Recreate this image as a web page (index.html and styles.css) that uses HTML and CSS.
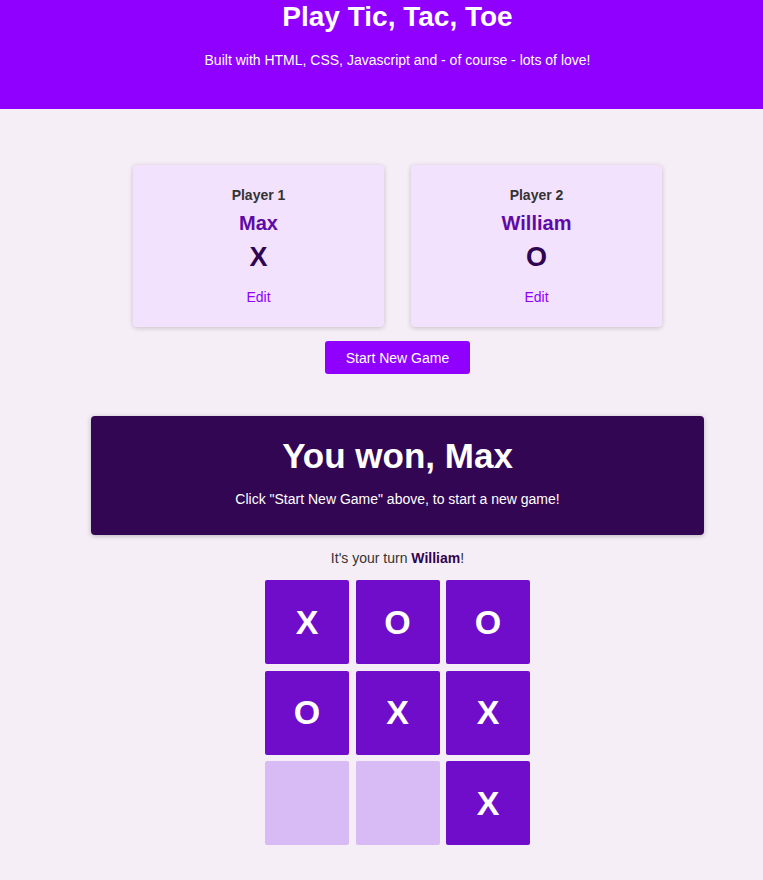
FILE: index.html
```html
<!DOCTYPE html>
<html lang="en">
<head>
<meta charset="utf-8">
<title>Tic Tac Toe</title>
<link rel="stylesheet" href="styles.css">
</head>
<body>
<header class="main-header">
  <h1 class="title">Play Tic, Tac, Toe</h1>
  <p class="subtitle">Built with HTML, CSS, Javascript and - of course - lots of love!</p>
</header>
<main class="content">
  <section class="config">
    <ol class="players">
      <li class="player-card">
        <h2 class="player-label">Player 1</h2>
        <h3 class="player-name">Max</h3>
        <p class="player-symbol">X</p>
        <button class="edit-btn">Edit</button>
      </li>
      <li class="player-card">
        <h2 class="player-label">Player 2</h2>
        <h3 class="player-name">William</h3>
        <p class="player-symbol">O</p>
        <button class="edit-btn">Edit</button>
      </li>
    </ol>
    <button class="start-btn">Start New Game</button>
  </section>
  <section class="game">
    <article class="game-over">
      <h2 class="game-over-title">You won, Max</h2>
      <p class="game-over-text">Click "Start New Game" above, to start a new game!</p>
    </article>
    <p class="turn">It's your turn <span class="turn-name">William</span>!</p>
    <ol class="board">
      <li class="cell filled">X</li>
      <li class="cell filled">O</li>
      <li class="cell filled">O</li>
      <li class="cell filled">O</li>
      <li class="cell filled">X</li>
      <li class="cell filled">X</li>
      <li class="cell"></li>
      <li class="cell"></li>
      <li class="cell filled">X</li>
    </ol>
  </section>
</main>
</body>
</html>
```
FILE: styles.css
```css
* { box-sizing: border-box; }
html, body { margin: 0; padding: 0; }
body {
  font-family: "Liberation Sans", Arial, sans-serif;
  background: #f6eef6;
  color: #333;
  font-size: 14px;
}
.main-header {
  background: #8f00ff;
  color: #fff;
  height: 109px;
  padding-left: 32px;
  text-align: center;
}
.title {
  margin: 0;
  padding-top: 1px;
  font-size: 28px;
  line-height: 32px;
  font-weight: bold;
}
.subtitle {
  margin: 18px 0 0;
  font-size: 14px;
  line-height: 18px;
}
.content {
  padding-left: 32px;
  text-align: center;
}
.config {
  padding-top: 56px;
  display: flex;
  flex-direction: column;
  align-items: center;
}
.players {
  list-style: none;
  margin: 0;
  padding: 0;
  display: flex;
  gap: 27px;
}
.player-card {
  width: 251px;
  height: 162px;
  background: #f3e2fe;
  border-radius: 4px;
  box-shadow: 0 1px 5px rgba(0,0,0,0.2);
  padding-top: 21px;
  display: flex;
  flex-direction: column;
  align-items: center;
}
.player-label {
  margin: 0;
  font-size: 14px;
  line-height: 18px;
  font-weight: bold;
  color: #333;
}
.player-name {
  margin: 7px 0 0;
  font-size: 20px;
  line-height: 24px;
  font-weight: bold;
  color: #5f0aa8;
}
.player-symbol {
  margin: 6px 0 0;
  font-size: 27px;
  line-height: 32px;
  font-weight: bold;
  color: #2f0450;
}
.edit-btn {
  margin-top: 15px;
  border: 0;
  background: none;
  padding: 0;
  font: 14px/18px "Liberation Sans", Arial, sans-serif;
  color: #8f00ff;
}
.start-btn {
  margin-top: 14px;
  width: 145px;
  height: 33px;
  border: 0;
  border-radius: 3px;
  background: #8f00ff;
  color: #fff;
  font: 14px/18px "Liberation Sans", Arial, sans-serif;
}
.game {
  padding-top: 42px;
  display: flex;
  flex-direction: column;
  align-items: center;
}
.game-over {
  width: 613px;
  height: 119px;
  background: #330654;
  color: #fff;
  border-radius: 4px;
  box-shadow: 0 1px 5px rgba(0,0,0,0.25);
  padding-top: 20px;
}
.game-over-title {
  margin: 0;
  font-size: 35px;
  line-height: 40px;
  font-weight: bold;
}
.game-over-text {
  margin: 14px 0 0;
  font-size: 14px;
  line-height: 18px;
}
.turn {
  margin: 14px 0 0;
  font-size: 14px;
  line-height: 18px;
  color: #333;
}
.turn-name {
  font-weight: bold;
  color: #2f0450;
}
.board {
  list-style: none;
  margin: 13px 0 0;
  padding: 0;
  display: grid;
  grid-template-columns: repeat(3, 84px);
  grid-auto-rows: 84px;
  gap: 6.5px;
}
.cell {
  background: #d8baf5;
  border-radius: 2px;
  display: flex;
  align-items: center;
  justify-content: center;
  color: #fff;
  font-size: 34px;
  font-weight: bold;
}
.cell.filled { background: #700dcb; }
```
